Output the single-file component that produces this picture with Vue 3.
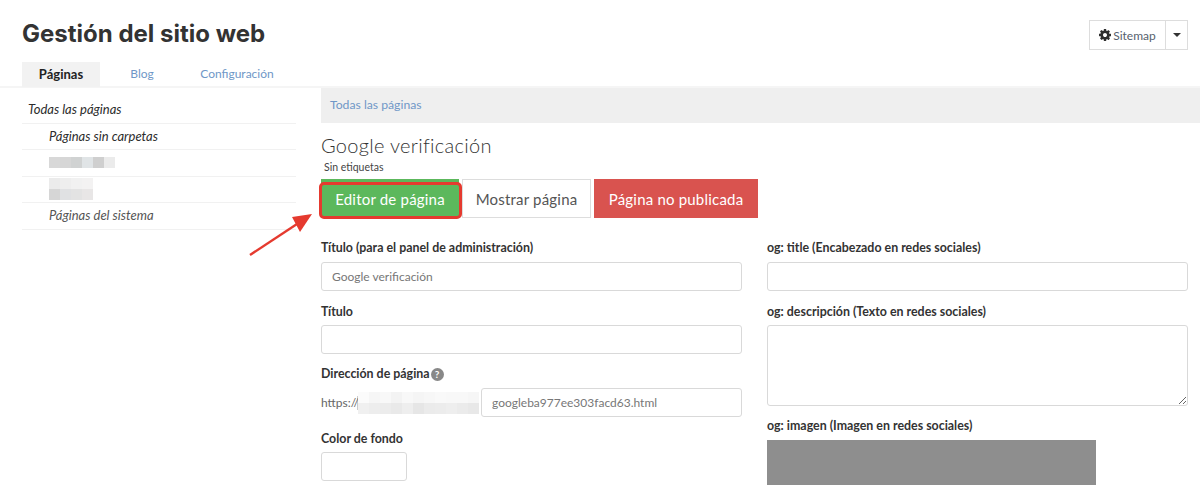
<script setup>
const tabs = [
  { label: 'Páginas', active: true },
  { label: 'Blog' },
  { label: 'Configuración' },
]
const blurA = [['#d8d8d8', '#d6d6d6', '#d0d2d2', '#e0e4e6', '#cfcfcf', '#ebebeb']]
const blurB = [
  ['#ebebeb', '#eeeeee', '#f1f1f1', '#f3f2f2'],
  ['#d6d6d6', '#e0e1e3', '#e3e3e3', '#e8e6e6'],
]
const blurC = [
  ['#fbfbfb', '#f6f6f6', '#f8f8f8', '#f3f3f3', '#f8f8f8', '#f5f5f5', '#f7f7f7', '#f9f9f9', '#f8f8f8', '#f8f8f8', '#f6f6f6'],
  ['#f0f0f0', '#ededed', '#ececec', '#e9e9e9', '#eeeeee', '#e6e6e6', '#ebebeb', '#ececec', '#eeeeee', '#ebebeb', '#e8e8e8'],
]
</script>

<template>
  <div class="page">
    <header class="top">
      <h1>Gestión del sitio web</h1>
      <div class="split">
        <button class="sitemap">
          <svg class="gear" viewBox="0 0 1536 1536" width="12" height="12"><path fill="#2f2f2f" d="M1024 768q0-106-75-181t-181-75-181 75-75 181 75 181 181 75 181-75 75-181zm512-109v222q0 12-8 23t-20 13l-185 28q-19 54-39 91 35 50 107 138 10 12 10 25t-9 23q-27 37-99 108t-94 71q-12 0-26-9l-138-108q-44 23-91 38-16 136-29 186-7 28-36 28H657q-14 0-24.500-8.500T621 1506l-28-184q-49-16-90-37l-141 107q-10 9-25 9-14 0-25-11-126-114-165-168-7-10-7-23 0-12 8-23 15-21 51-66.500t54-70.500q-27-50-41-99L29 913q-13-2-21-12.500T0 877V655q0-12 8-23t19-13l186-28q14-46 39-92-40-57-107-138-10-12-10-24 0-10 9-23 26-36 98.500-107.500T337 135q13 0 26 10l138 107q44-23 91-38 16-136 29-186 7-28 36-28h222q14 0 24.500 8.500T915 30l28 184q49 16 90 37l142-107q9-9 24-9 13 0 25 10 129 119 165 170 7 8 7 22 0 12-8 23-15 21-51 66.500t-54 70.500q26 50 41 98l183 28q13 2 21 12.500t8 23.500z"/></svg>
          <span>Sitemap</span>
        </button>
        <button class="caret" aria-label="Más"><i></i></button>
      </div>
    </header>

    <nav class="tabs">
      <a v-for="t in tabs" :key="t.label" :class="['tab', { active: t.active }]">{{ t.label }}</a>
    </nav>

    <div class="body">
      <aside class="side">
        <div class="row root">Todas las páginas</div>
        <div class="row sub">Páginas sin carpetas</div>
        <div class="row sub blurred">
          <div class="blur">
            <div v-for="(r, i) in blurA" :key="i" class="blur-row">
              <span v-for="(c, j) in r" :key="j" class="cell" :style="{ background: c }"></span>
            </div>
          </div>
        </div>
        <div class="row sub blurred">
          <div class="blur">
            <div v-for="(r, i) in blurB" :key="i" class="blur-row">
              <span v-for="(c, j) in r" :key="j" class="cell" :style="{ background: c }"></span>
            </div>
          </div>
        </div>
        <div class="row sub system">Páginas del sistema</div>
      </aside>

      <main class="main">
        <div class="crumb"><a>Todas las páginas</a></div>
        <h2>Google verificación</h2>
        <div class="tags">Sin etiquetas</div>
        <div class="actions">
          <div class="highlight"><button class="btn green">Editor de página</button></div>
          <button class="btn plain">Mostrar página</button>
          <button class="btn red">Página no publicada</button>
        </div>

        <div class="form">
          <div class="col">
            <div class="field f1">
              <label>Título (para el panel de administración)</label>
              <input class="control" placeholder="Google verificación" />
            </div>
            <div class="field f2">
              <label>Título</label>
              <input class="control" />
            </div>
            <div class="field f3">
              <label>Dirección de página<span class="help">?</span></label>
              <div class="url">
                <span class="proto">https://</span>
                <div class="blur url-blur">
                  <div v-for="(r, i) in blurC" :key="i" class="blur-row">
                    <span v-for="(c, j) in r" :key="j" class="cell" :style="{ background: c }"></span>
                  </div>
                </div>
                <input class="control slug" value="googleba977ee303facd63.html" />
              </div>
            </div>
            <div class="field f4">
              <label>Color de fondo</label>
              <input class="control color" />
            </div>
          </div>
          <div class="col">
            <div class="field f1">
              <label>og: title (Encabezado en redes sociales)</label>
              <input class="control" />
            </div>
            <div class="field f2">
              <label>og: descripción (Texto en redes sociales)</label>
              <textarea class="control area"></textarea>
            </div>
            <div class="field f5">
              <label>og: imagen (Imagen en redes sociales)</label>
              <div class="image"></div>
            </div>
          </div>
        </div>
      </main>
    </div>

    <svg class="arrow" width="70" height="48" viewBox="0 0 70 48">
      <path d="M1 45 L48 14" stroke="#e53a2f" stroke-width="2.4" fill="none" />
      <path d="M63 4 L43 7 L51 22 Z" fill="#e53a2f" />
    </svg>
  </div>
</template>

<style>
html, body { margin: 0; background: #fff; overflow: hidden; }
</style>

<style scoped>
.page {
  position: relative;
  width: 1200px;
  height: 485px;
  overflow: hidden;
  font-family: Lato, "Liberation Sans", sans-serif;
  font-size: 13px;
  color: #2f2f2f;
}
.top {
  display: flex;
  justify-content: space-between;
  align-items: flex-start;
  padding: 20px 12px 0 22px;
  height: 42px;
}
h1 {
  margin: 0;
  font-family: Inter, Lato, sans-serif;
  font-size: 24px;
  line-height: 28px;
  font-weight: 700;
  color: #333;
}
.split { display: flex; }
.split button {
  height: 30px;
  background: #fff;
  border: 1px solid #ddd;
  padding: 0;
  font: inherit;
  font-size: 12px;
  color: #56616d;
}
.sitemap {
  width: 77px;
  display: flex;
  align-items: center;
  justify-content: center;
  gap: 2px;
}
.caret { width: 22px; border-left: 0 !important; display: flex; align-items: center; justify-content: center; }
.caret i {
  width: 0; height: 0;
  border-left: 4px solid transparent;
  border-right: 4px solid transparent;
  border-top: 4px solid #333;
}
.tabs {
  display: flex;
  height: 24px;
  border-bottom: 2px solid #f5f5f5;
}
.tab {
  height: 25px;
  line-height: 24px;
  text-align: center;
  color: #6f97c7;
  font-size: 12px;
}
.tab:nth-child(1) { width: 78px; margin-left: 22px; background: #f2f2f2; color: #222; font-weight: 700; font-size: 13px; }
.tab:nth-child(2) { width: 84px; }
.tab:nth-child(3) { width: 106px; }
.body {
  display: flex;
  padding-left: 22px;
}
.side {
  width: 274px;
  flex: none;
  padding-top: 9px;
  font-style: italic;
  font-size: 13px;
  color: #2c2c2c;
}
.row {
  height: 25.500px;
  line-height: 25px;
  border-bottom: 1px solid #f1f1f1;
}
.root { padding-left: 6px; }
.sub { padding-left: 27px; }
.system { color: #555; }
.blurred { display: flex; align-items: center; }
.blur { display: flex; flex-direction: column; }
.blur-row { display: flex; }
.cell { width: 11px; height: 11px; flex: none; }
.main {
  margin-left: 25px;
  flex: 1;
  min-width: 0;
}
.crumb {
  height: 35px;
  line-height: 34px;
  padding-left: 9px;
  background: #efefef;
  color: #6f97c7;
  font-size: 12.200px;
}
h2 {
  margin: 10px 0 0;
  font-size: 20px;
  line-height: 24px;
  font-weight: 300;
  color: #333;
  letter-spacing: .3px;
}
.tags {
  margin: 3px 0 0 3px;
  font-size: 10.500px;
  line-height: 14px;
  color: #444;
}
.actions {
  display: flex;
  gap: 3px;
  margin-top: 5px;
  height: 39px;
}
.btn {
  height: 39px;
  box-sizing: border-box;
  font: inherit;
  font-size: 15px;
  letter-spacing: .2px;
  padding: 0;
  cursor: pointer;
}
.highlight {
  width: 138px;
  height: 39px;
  position: relative;
}
.green {
  width: 138px;
  background: #5cb85c;
  border: 0;
  color: #fff;
}
.highlight::after {
  content: "";
  position: absolute;
  left: -2px; right: -3px; top: 3px; bottom: -1px;
  border: 3px solid #e53a2f;
  border-radius: 5px;
}
.plain {
  width: 129px;
  background: #fff;
  border: 1px solid #ddd;
  color: #555;
}
.red {
  width: 164px;
  background: #d9534f;
  border: 1px solid #d9534f;
  color: #fff;
}
.form {
  display: flex;
  gap: 25px;
  padding-right: 12px;
  margin-top: 21px;
}
.col { flex: 1; min-width: 0; }
.field { display: flex; flex-direction: column; }
label {
  font-weight: 700;
  font-size: 12.400px;
  line-height: 18px;
  color: #333;
  margin-bottom: 5px;
}
.control {
  box-sizing: border-box;
  width: 100%;
  height: 29px;
  border: 1px solid #d9d9d9;
  border-radius: 3px;
  padding: 0 10px;
  font: inherit;
  font-size: 12px;
  color: #777;
  background: #fff;
  outline: none;
  display: block;
}
.control::placeholder { color: #777; opacity: 1; }
.f2 { margin-top: 12px; }
.f2 label { margin-bottom: 4px; }
.f3 { margin-top: 11px; }
.f4 { margin-top: 13px; }
.f4 label { margin-bottom: 4px; }
.f5 { margin-top: 11px; }
.area { height: 81px; resize: vertical; }
.url { display: flex; align-items: center; }
.proto { color: #666; width: 36px; flex: none; font-size: 12px; border-right: 1px solid #ccc; line-height: 14px; }
.url-blur { width: 121px; flex: none; margin-right: 2px; }
.slug { flex: 1; min-width: 0; }
.color { width: 86px; }
.help {
  display: inline-block;
  width: 13px;
  height: 13px;
  margin-left: 1px;
  border-radius: 50%;
  background: #888;
  color: #fff;
  font-size: 10px;
  line-height: 13px;
  text-align: center;
}
.image { width: 329px; height: 60px; background: #8e8e8e; }
.arrow {
  position: absolute;
  left: 249px;
  top: 210px;
}
</style>
